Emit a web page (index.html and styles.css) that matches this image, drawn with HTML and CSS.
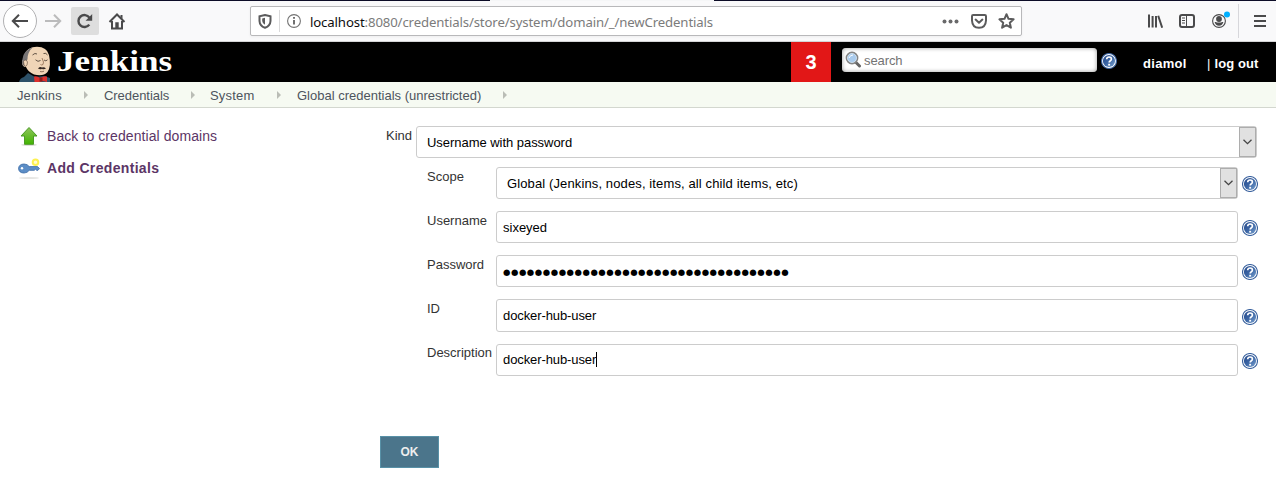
FILE: index.html
```
<!DOCTYPE html>
<html lang="en">
<head>
<meta charset="utf-8">
<title>New Credentials [Jenkins]</title>
<link rel="stylesheet" href="styles.css">
</head>
<body>
<svg class="defs" aria-hidden="true">
  <defs>
    <linearGradient id="blue" x1="0" y1="0" x2="1" y2="1">
      <stop offset="0" stop-color="#24488a"/><stop offset=".5" stop-color="#3c66a5"/><stop offset="1" stop-color="#7ba3d0"/>
    </linearGradient>
    <linearGradient id="green" x1="0" y1="0" x2="0" y2="1">
      <stop offset="0" stop-color="#8fc45c"/><stop offset="1" stop-color="#41b400"/>
    </linearGradient>
    <symbol id="help" viewBox="0 0 16 16">
      <circle cx="8" cy="8" r="7.5" fill="#fff" stroke="#3b639f" stroke-width="1.1"/>
      <circle cx="8" cy="8" r="6.1" fill="url(#blue)"/>
      <path d="M5.7 6.2Q5.8 4 8.1 4T10.4 6Q10.4 7.2 9.1 8Q8.2 8.6 8.2 9.6" fill="none" stroke="#fff" stroke-width="1.7"/>
      <rect x="7.2" y="10.8" width="1.9" height="1.8" fill="#fff"/>
    </symbol>
  </defs>
</svg>

<div class="browser">
  <div class="tabstrip"><span class="tab-active"></span></div>
  <div class="toolbar">
    <div class="nav">
      <span class="back"><svg width="18" height="16" viewBox="0 0 18 16"><path d="M17 8H2M8 1.8L1.8 8L8 14.2" class="ln"/></svg></span>
      <svg class="fwd" width="18" height="16" viewBox="0 0 18 16"><path d="M1 8h15M10 1.8L16.2 8L10 14.2" class="ln"/></svg>
      <span class="reload"><svg width="18" height="16" viewBox="0 0 18 16"><path d="M13.3 11.6A6 6 0 1 1 13.4 4.6" class="ln thick"/><path d="M16.2 1v6.7H9.6z" fill="#4a4a4b"/></svg></span>
      <svg class="home" width="18" height="17" viewBox="0 0 18 17"><path d="M1.5 9L9 1.5L16.5 9M4 8v7.5h10V8" class="ln"/><path d="M12.5 2h2v4l-2-2zM7.3 15.5V9.2h3.4v6.3z" fill="#4a4a4b"/></svg>
    </div>
    <div class="urlbar">
      <svg class="shield" width="14" height="15" viewBox="0 0 14 15"><path d="M7 1L12.5 2.3V7Q12.3 11.8 7 13.8Q1.7 11.8 1.5 7V2.3z" class="ln"/><path d="M7 3.8v7Q4.3 9.5 4.2 7V4.4z" fill="#5b5b5c"/></svg>
      <span class="url-sep"></span>
      <svg class="info" width="14" height="14" viewBox="0 0 14 14"><circle cx="7" cy="7" r="6.4" fill="none" stroke="#737373" stroke-width="1.1"/><path d="M7 6v4.6M7 3v1.8" stroke="#606060" stroke-width="1.8"/></svg>
      <span class="url"><b>localhost</b>:8080/credentials/store/system/domain/_/newCredentials</span>
      <svg class="dots" width="17" height="5" viewBox="0 0 17 5"><g fill="#69696a"><circle cx="2.5" cy="2.5" r="2"/><circle cx="8.5" cy="2.5" r="2"/><circle cx="14.5" cy="2.5" r="2"/></g></svg>
      <svg class="pocket" width="16" height="15" viewBox="0 0 16 15"><path d="M1 2.2Q1 1 2.2 1H13.8Q15 1 15 2.2V6.5Q14.7 13.6 8 13.8Q1.3 13.6 1 6.5zM4.6 5.6L8 8.8L11.4 5.6" class="ln round"/></svg>
      <svg class="star" width="17" height="16" viewBox="0 0 17 16"><path d="M8.5 1.2L10.5 5.8L15.6 6.3L11.8 9.7L12.9 14.7L8.5 12.1L4.1 14.7L5.2 9.7L1.4 6.3L6.5 5.8z" class="ln round"/></svg>
    </div>
    <div class="tools">
      <svg class="library" width="16" height="15" viewBox="0 0 16 15"><path d="M2 .5v13M5.6 2v11.5M9 2v11.5M11.2 1.7L15.2 13.7" class="ln"/></svg>
      <svg class="sidebar" width="16" height="14" viewBox="0 0 16 14"><rect x="1" y="1" width="14" height="12" rx="2" class="ln"/><path d="M7.5 1v12M3 4h3M3 6.5h3M3 9h3" stroke="#4a4a4b"/></svg>
      <svg class="account" width="18" height="18" viewBox="0 0 18 18"><circle cx="7" cy="10" r="6.4" fill="none" stroke="#4a4a4b" stroke-width="1.1"/><circle cx="7" cy="8" r="2.9" fill="#4a4a4b"/><path d="M2.6 11Q4.4 10.6 5 11.5H9Q9.6 10.6 11.4 11Q10.5 14.7 7 14.8Q3.5 14.7 2.6 11z" fill="#4a4a4b"/><circle cx="15" cy="3.5" r="3" fill="#00b0ff"/></svg>
      <span class="tool-sep"></span>
      <svg class="menu" width="12" height="12" viewBox="0 0 12 12"><path d="M0 1h12M0 6h12M0 11h12" class="ln"/></svg>
    </div>
  </div>
</div>

<header class="header">
  <svg class="butler" width="34" height="36" viewBox="0 0 34 36">
    <path d="M0 36Q1 32 5 31L9 27L16 31L25 30L31 32V36z" fill="#2c5067"/>
    <path d="M5 9Q8 1 18 .8Q28 1 30 9Q32.500 20 28.500 26Q24 31 15 28.500Q9 26 7 21Q3 21 3 16Q3 14 5 13z" fill="#f0d5b7"/>
    <path d="M3.500 13Q4 5 14 1Q8.500 6 8.500 13L6 20.500Q3 19 3 16z" fill="#777475"/>
    <path d="M4.500 15.500Q7 12.500 8.500 16Q8.500 20 6.500 20.500Q4.500 19 4.500 15.500z" fill="#f0d5b7" stroke="#5e4839" stroke-width=".6"/>
    <path d="M13.500 9Q16 6.500 18 8M24.500 7.500Q27 6.500 28.500 9M16.500 13.800Q19 16.500 21.500 14.500M25 14Q27 15.800 28.500 13.800" fill="none" stroke="#40332a" stroke-width=".8"/>
    <path d="M23 12Q25.500 17 24 18.500Q22.500 19.500 21.500 18.500" fill="none" stroke="#8a674e" stroke-width=".8"/>
    <path d="M19 22.500Q21 20.200 23 21.500Q25 20.500 27 22.500Q24.500 23.800 23 22.700Q21 24 19 22.500z" fill="#332722"/>
    <path d="M21 25.500Q23 26.300 25 25.200" fill="none" stroke="#795a45" stroke-width=".8"/>
    <path d="M15.500 36L15 30.500Q18 29.500 21 32Q25 29.500 28 30.500V36L24 35L20 36z" fill="#dc302d"/><path d="M20.500 31.500h3v4h-3z" fill="#8f1d1c"/>
  </svg>
  <span class="brand">Jenkins</span>
  <span class="alert">3</span>
  <div class="search">
    <svg width="17" height="17" viewBox="0 0 17 17"><path d="M10.5 11L14.5 15" stroke="#656565" stroke-width="3" stroke-linecap="round"/><circle cx="7" cy="7" r="5.5" fill="#a9cbed" stroke="#858585" stroke-width="1.8"/><circle cx="7" cy="7" r="4.5" fill="none" stroke="#d7e8f8" stroke-width=".8"/><path d="M4 7Q5 4 8 4" fill="none" stroke="#fff"/></svg>
    <span>search</span>
  </div>
  <svg class="help header-help"><use href="#help"/></svg>
  <span class="user">diamol</span>
  <span class="logout"><i>|</i>log out</span>
</header>

<nav class="crumbs">
  <span class="c1">Jenkins</span><i></i><span class="c2">Credentials</span><i></i><span class="c3">System</span><i></i><span class="c4">Global credentials (unrestricted)</span><i></i>
</nav>

<div class="page">
  <aside class="side">
    <div class="task">
      <svg width="22" height="22" viewBox="0 0 22 22"><ellipse cx="11" cy="19.8" rx="8" ry="1.3" fill="#deded9"/><path d="M11 2.5L19 11H15.5V19.3H6.5V11H3z" fill="url(#green)" stroke="#4b9b25"/></svg>
      <span class="t1">Back to credential domains</span>
    </div>
    <div class="task">
      <svg width="24" height="22" viewBox="0 0 24 22"><ellipse cx="11" cy="21" rx="10" ry="1" fill="#e5e5e3"/><path d="M.5 11.5Q1 7 6 7Q9.5 7 11.2 9.6H19.5L21.5 11.5L20 13.3H18.7L17.5 12.3L16.2 13.3H11.2Q9.5 16 6 16Q1 16 .5 11.5z" fill="#5b8dc6" stroke="#3768a5" stroke-width=".8"/><circle cx="4" cy="11.3" r="1.2" fill="#fff"/><circle cx="17.5" cy="5.3" r="2.8" fill="#fffbd0" stroke="#fdf150" stroke-width="2"/></svg>
      <span class="t2">Add Credentials</span>
    </div>
  </aside>
  <main class="form">
    <div class="kind">
      <label>Kind</label>
      <div class="field select"><span class="v1">Username with password</span><span class="arrow"><svg width="9" height="6" viewBox="0 0 9 6"><path d="M.5 .7L4.5 4.7L8.5 .7"/></svg></span></div>
    </div>
    <div class="row">
      <label>Scope</label>
      <div class="field select"><span class="v2">Global (Jenkins, nodes, items, all child items, etc)</span><span class="arrow"><svg width="9" height="6" viewBox="0 0 9 6"><path d="M.5 .7L4.5 4.7L8.5 .7"/></svg></span></div>
      <svg class="help"><use href="#help"/></svg>
    </div>
    <div class="row">
      <label>Username</label>
      <div class="field"><span>sixeyed</span></div>
      <svg class="help"><use href="#help"/></svg>
    </div>
    <div class="row">
      <label>Password</label>
      <div class="field"><span class="password">●●●●●●●●●●●●●●●●●●●●●●●●●●●●●●●●●●●●</span></div>
      <svg class="help"><use href="#help"/></svg>
    </div>
    <div class="row tall">
      <label>ID</label>
      <div class="field"><span class="v3">docker-hub-user</span></div>
      <svg class="help"><use href="#help"/></svg>
    </div>
    <div class="row last">
      <label>Description</label>
      <div class="field"><span class="v3">docker-hub-user</span><span class="caret"></span></div>
      <svg class="help"><use href="#help"/></svg>
    </div>
    <div class="ok">OK</div>
  </main>
</div>
</body>
</html>
```
FILE: styles.css
```
* { box-sizing: border-box; }
body { margin: 0; width: 1276px; height: 491px; overflow: hidden; background: #fff; font-family: "Liberation Sans", Arial, sans-serif; font-size: 13px; color: #333; }
svg { display: block; flex: none; }
span, label { white-space: nowrap; }
.defs { position: absolute; width: 0; height: 0; }
.ln { fill: none; stroke: #4a4a4b; stroke-width: 2; }
.thick { stroke-width: 2.4; }
.round { stroke-linejoin: round; stroke-linecap: round; }

.browser { height: 42px; background: #f9f9fa; border-bottom: 1px solid #d4d4d6; }
.tabstrip { height: 1px; background: #0c0c27; }
.tab-active { display: block; width: 224px; height: 1px; margin-left: 490px; background: #f5f6f7; }
.toolbar { display: flex; height: 40px; align-items: center; }
.nav { display: flex; align-items: center; width: 250px; padding-left: 3px; }
.back { display: flex; align-items: center; justify-content: center; width: 34px; height: 34px; border: 1px solid #b1b1b3; border-radius: 50%; background: #fff; }
.fwd { margin-left: 7px; opacity: .35; }
.reload { display: flex; align-items: center; justify-content: center; width: 28px; height: 28px; margin-left: 9px; border-radius: 2px; background: #dedede; }
.home { margin-left: 9px; }
.urlbar { display: flex; align-items: center; width: 772px; height: 30px; padding-left: 7px; border: 1px solid #b8b8ba; border-radius: 2px; background: #fff; box-shadow: 0 1px 3px #0000000d; }
.urlbar .ln { stroke: #5b5b5c; }
.url-sep { width: 1px; height: 22px; margin-left: 7px; background: #dadadb; }
.info { margin-left: 7px; }
.url { width: 632px; margin-left: 9px; padding-top: 2px; font: 13.2px "Noto Sans", sans-serif; letter-spacing: -.13px; color: #7b7b7b; }
.url b { font-weight: 400; color: #0c0c0d; }
.pocket { margin-left: 12px; }
.star { margin-left: 11px; }
.tools { display: flex; align-items: center; margin-left: 125px; }
.sidebar { margin-left: 16px; }
.account { margin: -3px 0 0 17px; }
.tool-sep { width: 1px; height: 34px; margin-left: 8px; background: #d7d7db; }
.menu { margin-left: 15px; }

.header { display: flex; height: 40px; background: #000; color: #fff; font-weight: 700; }
.butler { margin: 4px 0 0 19px; }
.brand { width: 734px; margin-left: 4px; font: 700 30px/38px "Liberation Serif", serif; transform: scaleX(1.17); transform-origin: left; }
.alert { width: 40px; background: #e21717; font-size: 20px; line-height: 40px; text-align: center; }
.search { display: flex; width: 255px; height: 24px; margin: 6px 0 0 11px; padding: 3px 0 0 3px; border-radius: 4px; background: #fff; box-shadow: inset 0 0 4px #999; color: #737373; font-weight: 400; }
.search span { margin-left: 2px; line-height: 19px; letter-spacing: -.1px; }
.help { width: 16px; height: 16px; }
.header-help { margin: 11px 0 0 4px; }
.user { width: 64px; margin-left: 26px; line-height: 43px; letter-spacing: .3px; }
.logout { line-height: 43px; letter-spacing: .1px; }
.logout i { margin-right: 4px; font-style: normal; font-weight: 400; color: #fcfcfc; }

.crumbs { display: flex; align-items: center; height: 26px; padding-left: 17px; background: #f6faf2; border-bottom: 1px solid #d3d7cf; color: #4d545d; }
.crumbs span { height: 25px; line-height: 27px; }
.crumbs i { width: 0; margin-top: 1px; border: 4px solid transparent; border-left-color: #babdb6; border-right: 0; }
.c1 { width: 67px; letter-spacing: .1px; }
.c2 { width: 87px; margin-left: 16px; letter-spacing: -.05px; }
.c3 { width: 67px; margin-left: 15px; letter-spacing: .2px; }
.c4 { width: 206px; margin-left: 16px; }

.page { display: flex; }
.side { width: 380px; padding: 17px 0 0 18px; color: #5c3566; font-size: 14px; }
.task { display: flex; align-items: center; height: 22px; margin-bottom: 10px; }
.task span { margin-left: 7px; letter-spacing: .08px; }
.task svg + .t2 { margin-left: 5px; font-weight: 700; letter-spacing: .33px; }
.form { width: 896px; padding-top: 18px; }
.kind { display: flex; height: 32px; margin-bottom: 9px; }
.kind label { width: 36px; padding-left: 6px; line-height: 20px; }
.field { display: flex; align-items: center; width: 742px; height: 32px; padding-left: 6px; border: 1px solid #ccc; border-radius: 3px; color: #000; }
.kind .field { width: 841px; }
.select { padding-left: 10px; }
.v1 { letter-spacing: -.04px; }
.v2 { letter-spacing: .12px; }
.v3 { letter-spacing: -.1px; }
.arrow { display: flex; align-items: center; justify-content: center; width: 17px; height: 30px; margin-left: auto; border: 1px solid #adadad; background: #e1e1e1; }
.arrow path { fill: none; stroke: #444; stroke-width: 1.3; }
.row { display: flex; height: 32px; margin: 0 0 12px 47px; }
.row label { width: 69px; line-height: 20px; }
.row .help { margin: 9px 0 0 4px; }
.tall, .tall .field { height: 33px; }
.row.tall .help { margin-top: 10px; }
.last label { line-height: 18px; }
.last .field { padding-bottom: 2px; }
.password { padding-top: 1px; font: 8.5px "DejaVu Sans", sans-serif; letter-spacing: .53px; }
.caret { width: 1px; height: 15px; background: #000; }
.ok { width: 59px; height: 32px; margin-top: 60px; border: 1px solid #5891a7; background: #4b758b; color: #eee; font-size: 12px; font-weight: 700; line-height: 30px; text-align: center; }
```
